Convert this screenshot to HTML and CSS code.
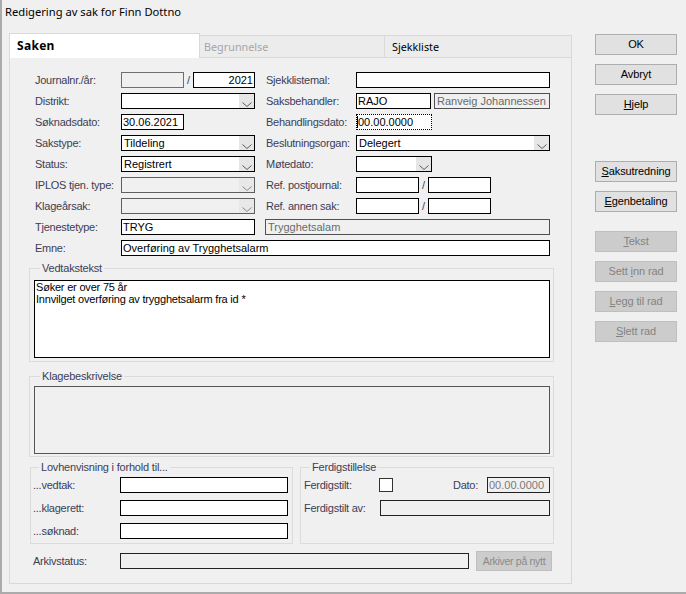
FILE: index.html
```html
<!DOCTYPE html>
<html>
<head>
<meta charset="utf-8">
<title>Redigering av sak</title>
<link rel="stylesheet" href="styles.css">
</head>
<body>
<div class="window">
  <div class="titlebar">Redigering av sak for Finn Dottno</div>
  <div class="main">
    <div class="tabctl">
      <div class="tabstrip">
        <div class="tab active">Saken</div>
        <div class="tab t2 off">Begrunnelse</div>
        <div class="tab t3">Sjekkliste</div>
      </div>
      <div class="panel">
        <div class="form">
          <span class="lbl">Journalnr./år:</span>
          <div class="pair"><span class="inp dis w63"></span><span class="slash">/</span><span class="inp w62 right">2021</span></div>
          <span class="lbl lbl2">Sjekklistemal:</span>
          <span class="inp"></span>

          <span class="lbl">Distrikt:</span>
          <div class="combo"><span class="val"></span><span class="arrow"><svg width="10" height="5" viewBox="0 0 10 5"><path d="M0.5 0.5L5 4.5L9.5 0.5" fill="none" stroke="#5a5a5a"/></svg></span></div>
          <span class="lbl lbl2">Saksbehandler:</span>
          <div class="pair"><span class="inp w75">RAJO</span><span class="inp ro grow gap3">Ranveig Johannessen</span></div>

          <span class="lbl">Søknadsdato:</span>
          <span class="inp w63">30.06.2021</span>
          <span class="lbl lbl2">Behandlingsdato:</span>
          <span class="inp focus w76"><span class="caret"></span>00.00.0000</span>

          <span class="lbl">Sakstype:</span>
          <div class="combo"><span class="val">Tildeling</span><span class="arrow"><svg width="10" height="5" viewBox="0 0 10 5"><path d="M0.5 0.5L5 4.5L9.5 0.5" fill="none" stroke="#5a5a5a"/></svg></span></div>
          <span class="lbl lbl2">Beslutningsorgan:</span>
          <div class="combo"><span class="val">Delegert</span><span class="arrow"><svg width="10" height="5" viewBox="0 0 10 5"><path d="M0.5 0.5L5 4.5L9.5 0.5" fill="none" stroke="#5a5a5a"/></svg></span></div>

          <span class="lbl">Status:</span>
          <div class="combo"><span class="val">Registrert</span><span class="arrow"><svg width="10" height="5" viewBox="0 0 10 5"><path d="M0.5 0.5L5 4.5L9.5 0.5" fill="none" stroke="#5a5a5a"/></svg></span></div>
          <span class="lbl lbl2">Møtedato:</span>
          <div class="combo w76"><span class="val"></span><span class="arrow"><svg width="10" height="5" viewBox="0 0 10 5"><path d="M0.5 0.5L5 4.5L9.5 0.5" fill="none" stroke="#5a5a5a"/></svg></span></div>

          <span class="lbl">IPLOS tjen. type:</span>
          <div class="combo dis"><span class="val"></span><span class="arrow"><svg width="10" height="5" viewBox="0 0 10 5"><path d="M0.5 0.5L5 4.5L9.5 0.5" fill="none" stroke="#8a8a8a"/></svg></span></div>
          <span class="lbl lbl2">Ref. postjournal:</span>
          <div class="pair"><span class="inp w63"></span><span class="slash">/</span><span class="inp w63"></span></div>

          <span class="lbl">Klageårsak:</span>
          <div class="combo dis"><span class="val"></span><span class="arrow"><svg width="10" height="5" viewBox="0 0 10 5"><path d="M0.5 0.5L5 4.5L9.5 0.5" fill="none" stroke="#8a8a8a"/></svg></span></div>
          <span class="lbl lbl2">Ref. annen sak:</span>
          <div class="pair"><span class="inp w63"></span><span class="slash">/</span><span class="inp w63"></span></div>

          <span class="lbl">Tjenestetype:</span>
          <span class="inp">TRYG</span>
          <span class="inp ro span34">Trygghetsalam</span>

          <span class="lbl">Emne:</span>
          <span class="inp span24">Overføring av Trygghetsalarm</span>
        </div>

        <fieldset class="group wide vedtak">
          <legend>Vedtakstekst</legend>
          <div class="textbox">Søker er over 75 år<br>Innvilget overføring av trygghetsalarm fra id *</div>
        </fieldset>

        <fieldset class="group wide klage">
          <legend>Klagebeskrivelse</legend>
          <div class="textbox ro"></div>
        </fieldset>

        <div class="lower">
          <fieldset class="group lov">
            <legend>Lovhenvisning i forhold til...</legend>
            <div class="row"><span class="lbl lw">...vedtak:</span><span class="inp w168"></span></div>
            <div class="row"><span class="lbl lw">...klagerett:</span><span class="inp w168"></span></div>
            <div class="row"><span class="lbl lw">...søknad:</span><span class="inp w168"></span></div>
          </fieldset>
          <fieldset class="group ferdig">
            <legend>Ferdigstillelse</legend>
            <div class="row"><span class="lbl fw">Ferdigstilt:</span><span class="check"></span><span class="lbl dato">Dato:</span><span class="inp ro2 w63">00.00.0000</span></div>
            <div class="row"><span class="lbl fw2">Ferdigstilt av:</span><span class="inp ro2 grow"></span></div>
          </fieldset>
        </div>

        <div class="arkiv">
          <span class="lbl lw">Arkivstatus:</span>
          <span class="inp ro2 w349"></span>
          <span class="btn dis small">Arkiver på nytt</span>
        </div>
      </div>
    </div>

    <div class="buttons">
      <span class="btn">OK</span>
      <span class="btn">Avbryt</span>
      <span class="btn"><u>H</u>jelp</span>
      <span class="btn sep1"><u>S</u>aksutredning</span>
      <span class="btn"><u>E</u>genbetaling</span>
      <span class="btn dis sep2"><u>T</u>ekst</span>
      <span class="btn dis">Sett <u>i</u>nn rad</span>
      <span class="btn dis"><u>L</u>egg til rad</span>
      <span class="btn dis"><u>S</u>lett rad</span>
    </div>
  </div>
</div>
</body>
</html>
```

FILE: styles.css
```css
html, body {
  margin: 0;
  padding: 0;
}

.window {
  width: 686px;
  height: 594px;
  box-sizing: border-box;
  background: #f0f0f0;
  border-left: 2px solid #ababab;
  border-bottom: 2px solid #ababab;
  font-family: "Liberation Sans", Arial, sans-serif;
  font-size: 11px;
  color: #000;
  overflow: hidden;
}

.titlebar {
  height: 33px;
  box-sizing: border-box;
  padding: 3px 0 0 3px;
  line-height: 18px;
  font-family: "Noto Sans", "Liberation Sans", sans-serif;
  font-size: 11.2px;
  color: #000;
  background: #f0f0f0;
}

.main {
  display: flex;
  align-items: flex-start;
}

.tabctl {
  margin-left: 7px;
  width: 563px;
}

.tabstrip {
  display: flex;
  align-items: flex-end;
  height: 24px;
  font-family: "Noto Sans", "Liberation Sans", sans-serif;
}

.tab {
  box-sizing: border-box;
  height: 22px;
  line-height: 21px;
  background: #ececec;
  border-top: 1px solid #d9d9d9;
  border-right: 1px solid #d9d9d9;
  font-size: 10.8px;
  color: #000;
}

.tab.active {
  position: relative;
  z-index: 1;
  width: 191px;
  height: 25px;
  margin-bottom: -1px;
  background: #fff;
  border-left: 1px solid #d9d9d9;
  padding-left: 7px;
  line-height: 23px;
  font-weight: bold;
  font-size: 12px;
  letter-spacing: 0.3px;
}

.tab.t2 {
  width: 185px;
  padding-left: 4px;
}

.tab.t3 {
  width: 187px;
  padding-left: 7px;
}

.tab.off {
  color: #a6a6a6;
}

.panel {
  box-sizing: border-box;
  height: 527px;
  border: 1px solid #d9d9d9;
  background: #f0f0f0;
  padding-top: 14px;
}

.form {
  margin-left: 25px;
  display: grid;
  grid-template-columns: 86px 134px 101px 194px;
  grid-auto-rows: 16px;
  row-gap: 5px;
}

.lbl {
  line-height: 16px;
  color: #3d3d55;
  white-space: nowrap;
  letter-spacing: -0.25px;
}

.lbl2 {
  padding-left: 11px;
}

.inp {
  box-sizing: border-box;
  display: block;
  height: 16px;
  border: 1px solid #000;
  background: #fff;
  padding: 0 1px;
  line-height: 15px;
  white-space: nowrap;
  overflow: hidden;
}

.inp.dis {
  background: #f0f0f0;
  border-color: #6e6e6e;
}

.inp.ro {
  background: #f0f0f0;
  border-color: #505050;
  color: #6a6a6a;
  padding-left: 2px;
}

.inp.ro2 {
  background: #f0f0f0;
  border-color: #222;
  color: #7a7a7a;
}

.inp.right {
  text-align: right;
}

.inp.focus {
  border: 1px dotted #000;
  display: flex;
  align-items: center;
  padding-left: 0;
}

.caret {
  width: 1px;
  height: 12px;
  background: #000;
}

.w62 { width: 62px; }
.w63 { width: 63px; }
.w75 { width: 75px; }
.w76 { width: 76px; }
.w168 { width: 168px; }
.w349 { width: 349px; }

.grow { flex: 1; }
.gap3 { margin-left: 3px; }

.span34 {
  grid-column: 3 / 5;
  margin-left: 10px;
}

.span24 {
  grid-column: 2 / 5;
}

.pair {
  display: flex;
}

.slash {
  width: 9px;
  text-align: center;
  line-height: 16px;
  color: #3d3d55;
}

.combo {
  box-sizing: border-box;
  display: flex;
  height: 16px;
  border: 1px solid #000;
  background: #fff;
}

.combo.w76 {
  width: 76px;
}

.combo .val {
  flex: 1;
  padding-left: 2px;
  line-height: 15px;
  white-space: nowrap;
  overflow: hidden;
}

.combo .arrow {
  width: 15px;
  background: #e6e6e6;
  display: flex;
  align-items: flex-end;
  justify-content: center;
  padding-bottom: 1px;
  box-sizing: border-box;
}

.combo .arrow svg {
  display: block;
}

.combo.dis {
  background: #f0f0f0;
  border-color: #5e5e5e;
}

.combo.dis .arrow {
  background: #e8e8e8;
}

.group {
  box-sizing: border-box;
  margin: 0;
  min-width: 0;
  border: 1px solid #dcdcdc;
  padding: 0;
}

.group legend {
  padding: 0 2px;
  margin-left: 6px;
  line-height: 13px;
  font-size: 11px;
  letter-spacing: -0.2px;
  color: #3d3d55;
}

.wide {
  width: 525px;
  margin-left: 19px;
}

.vedtak {
  margin-top: 6px;
  padding: 5px 3px 3px 4px;
}

.klage {
  margin-top: 8px;
  padding: 3px 3px 2px 4px;
}

.textbox {
  box-sizing: border-box;
  height: 78px;
  border: 1px solid #000;
  background: #fff;
  padding: 0 1px;
  line-height: 12px;
  font-size: 11px;
  letter-spacing: -0.2px;
}

.textbox.ro {
  height: 68px;
  background: #f0f0f0;
  border-color: #555;
}

.lower {
  display: flex;
  margin-left: 20px;
  margin-top: 4px;
  gap: 7px;
}

.lov {
  width: 263px;
  padding: 3px 0 4px 2px;
}

.ferdig {
  width: 254px;
  height: 83px;
  padding: 3px 3px 0 3px;
}

.lower .row {
  display: flex;
  align-items: center;
  height: 16px;
  margin-bottom: 7px;
}

.lower .row:last-of-type {
  margin-bottom: 0;
}

.lw {
  width: 87px;
}

.fw {
  width: 75px;
}

.fw2 {
  width: 76px;
}

.check {
  box-sizing: border-box;
  width: 14px;
  height: 14px;
  border: 1px solid #333;
  background: #fff;
}

.dato {
  margin-left: auto;
  width: 34px;
}

.arkiv {
  display: flex;
  align-items: center;
  margin-left: 23px;
  margin-top: 7px;
  height: 20px;
}

.btn {
  box-sizing: border-box;
  display: block;
  width: 82px;
  height: 21px;
  border: 1px solid #adadad;
  background: #e1e1e1;
  text-align: center;
  line-height: 19px;
  color: #000;
  white-space: nowrap;
  letter-spacing: -0.1px;
}

.btn u {
  text-underline-offset: 1px;
}

.btn.dis {
  background: #cccccc;
  border-color: #bfbfbf;
  color: #838383;
}

.btn.small {
  width: 76px;
  height: 20px;
  line-height: 18px;
  margin-left: 7px;
  font-size: 10.5px;
  letter-spacing: -0.3px;
  color: #8a8a8a;
}

.buttons {
  margin-left: 23px;
  padding-top: 1px;
  display: flex;
  flex-direction: column;
  gap: 9px;
}

.btn.sep1 {
  margin-top: 37px;
}

.btn.sep2 {
  margin-top: 10px;
}
```
